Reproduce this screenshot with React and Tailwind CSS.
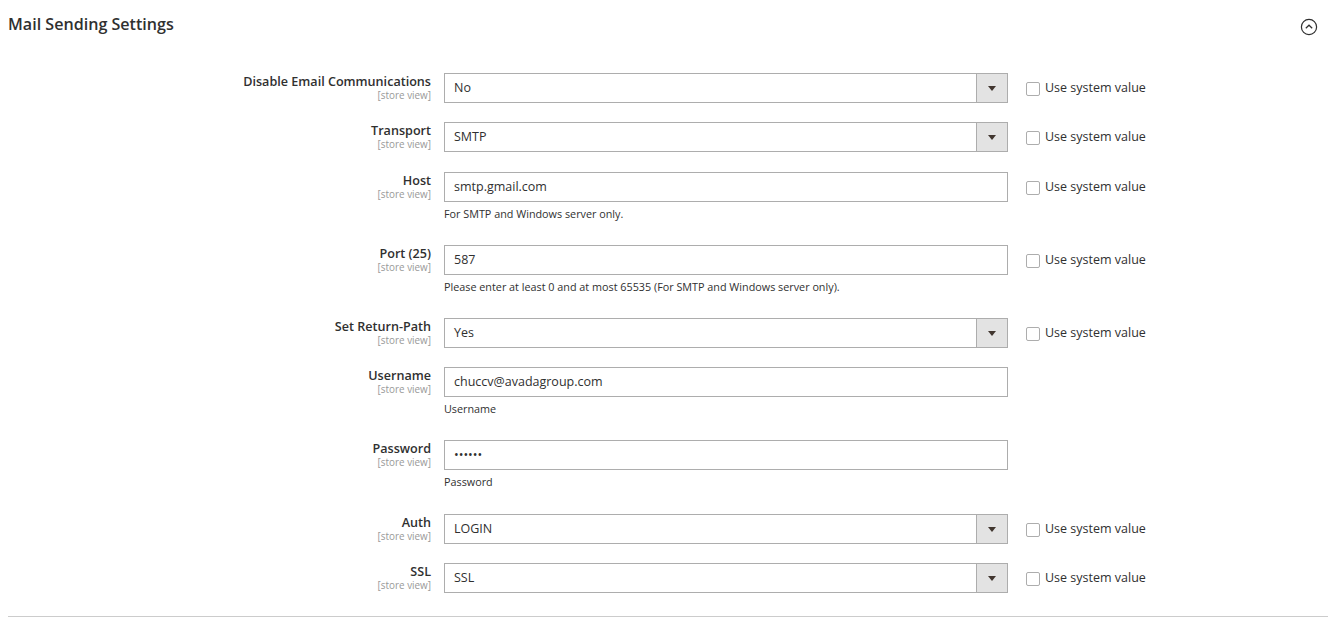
import React from "react";

const font = { fontFamily: '"Open Sans", "Noto Sans", sans-serif' };

function Label({ text }) {
  return (
    <div className="w-[423px] shrink-0 text-right">
      <div className="text-[12.6px] font-semibold leading-[16px] text-[#303030] pt-[1px]">{text}</div>
      <div className="text-[9.9px] leading-[10px] text-[#999]">[store view]</div>
    </div>
  );
}

function SysCheck() {
  return (
    <div className="flex items-center ml-[18px] h-[30px]">
      <span className="w-[14px] h-[14px] border border-[#adadad] rounded-[2px] bg-white mt-[1px]"></span>
      <span className="ml-[5px] text-[12.5px] text-[#303030]">Use system value</span>
    </div>
  );
}

function Select({ value }) {
  return (
    <div className="w-[564px] h-[30px] border border-[#adadad] bg-white flex items-center">
      <span className="flex-1 pl-[9px] text-[12.5px] text-[#303030]">{value}</span>
      <span className="w-[31px] h-full bg-[#e3e3e3] border-l border-[#adadad] flex items-center justify-center">
        <svg width="8" height="5" viewBox="0 0 8 5"><path d="M0 0 L8 0 L4 5 Z" fill="#41362f" /></svg>
      </span>
    </div>
  );
}

function Input({ value }) {
  return (
    <div className="w-[564px] h-[30px] border border-[#adadad] bg-white flex items-center">
      <span className="pl-[9px] text-[12.5px] text-[#303030]">{value}</span>
    </div>
  );
}

function Row({ label, children, note, sys = true, className = "" }) {
  return (
    <div className={"flex items-start " + className}>
      <Label text={label} />
      <div className="ml-[13px] w-[564px] shrink-0">
        {children}
        {note && <div className="pt-[5px] pb-[5px] text-[10.8px] leading-[13px] text-[#303030]">{note}</div>}
      </div>
      {sys && <SysCheck />}
    </div>
  );
}

export default function App() {
  return (
    <div className="bg-white w-[1336px] h-[623px] overflow-hidden" style={font}>
      <div className="px-[8px]">
        <div className="flex items-center justify-between h-[49px]">
          <h2 className="text-[16.1px] font-semibold text-[#303030] mb-[1px]">Mail Sending Settings</h2>
          <svg width="18" height="18" viewBox="0 0 18 18" className="mr-[10px] mt-[4px]">
            <circle cx="9" cy="9" r="7.6" fill="none" stroke="#303030" strokeWidth="1.2" />
            <path d="M5.8 10.3 L9 7.2 L12.2 10.3" fill="none" stroke="#303030" strokeWidth="1.2" />
          </svg>
        </div>
        <div className="pt-[24px] pb-[23px] border-b border-[#cccccc] flex flex-col">
          <Row label="Disable Email Communications"><Select value="No" /></Row>
          <Row label="Transport" className="mt-[19px]"><Select value="SMTP" /></Row>
          <Row label="Host" className="mt-[20px]" note="For SMTP and Windows server only."><Input value="smtp.gmail.com" /></Row>
          <Row label="Port (25)" className="mt-[20px]" note="Please enter at least 0 and at most 65535 (For SMTP and Windows server only)."><Input value="587" /></Row>
          <Row label="Set Return-Path" className="mt-[20px]"><Select value="Yes" /></Row>
          <Row label="Username" className="mt-[19px]" note="Username" sys={false}><Input value="chuccv@avadagroup.com" /></Row>
          <Row label="Password" className="mt-[20px]" note="Password" sys={false}><Input value="••••••" /></Row>
          <Row label="Auth" className="mt-[21px]"><Select value="LOGIN" /></Row>
          <Row label="SSL" className="mt-[19px]"><Select value="SSL" /></Row>
        </div>
      </div>
    </div>
  );
}
